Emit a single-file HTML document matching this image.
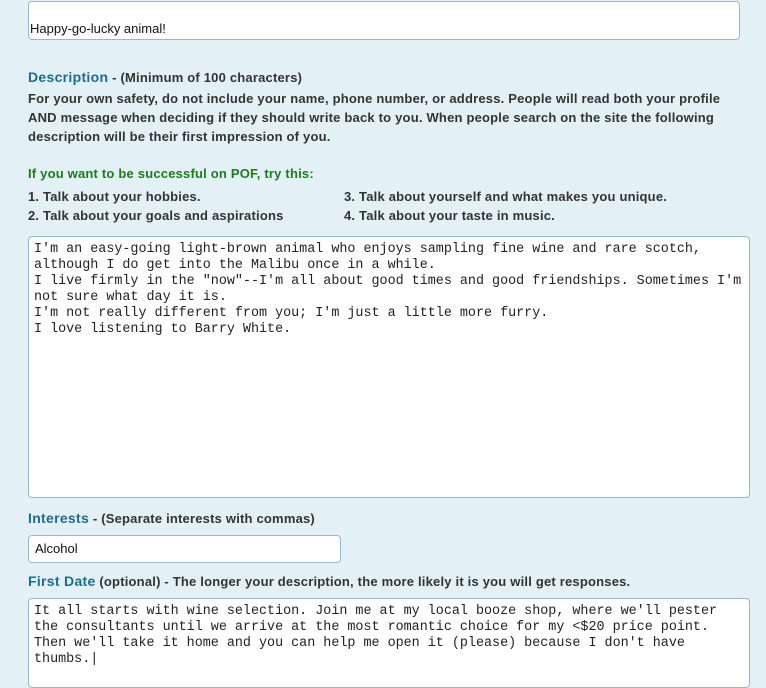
<!DOCTYPE html>
<html><head><style>
body{margin:0;background:#e3f1f7;width:766px;height:676px;overflow:hidden;position:relative;font-family:"Liberation Sans",Arial,sans-serif;color:#333;}
.a{position:absolute;}
.box{position:absolute;background:#fff;border:1px solid #9ab8cc;border-radius:4px;box-sizing:border-box;}
.t{font-size:13px;font-weight:bold;line-height:19px;letter-spacing:0.2px;}
.h{color:#1f6b8c;font-size:14px;font-weight:bold;letter-spacing:0.3px;}
.mono{font-family:"Liberation Mono","Courier New",monospace;font-size:13.4px;line-height:16px;color:#222;white-space:pre;}
</style></head><body>
<div class="box" style="left:28px;top:1px;width:712px;height:39px;"></div>
<div class="a" style="left:30px;top:21px;font-size:13px;color:#111;">Happy-go-lucky animal!</div>
<div class="a t" style="left:28px;top:68px;"><span class="h">Description</span> - (Minimum of 100 characters)</div>
<div class="a t" style="left:28px;top:89px;width:700px;">For your own safety, do not include your name, phone number, or address. People will read both your profile AND message when deciding if they should write back to you. When people search on the site the following description will be their first impression of you.</div>
<div class="a t" style="left:28px;top:164px;color:#1d7a1d;">If you want to be successful on POF, try this:</div>
<div class="a t" style="left:28px;top:187px;">1. Talk about your hobbies.<br>2. Talk about your goals and aspirations</div>
<div class="a t" style="left:344px;top:187px;">3. Talk about yourself and what makes you unique.<br>4. Talk about your taste in music.</div>
<div class="box" style="left:28px;top:236px;width:722px;height:262px;"></div>
<div class="a mono" style="left:34px;top:242px;">I'm an easy-going light-brown animal who enjoys sampling fine wine and rare scotch,
although I do get into the Malibu once in a while.
I live firmly in the "now"--I'm all about good times and good friendships. Sometimes I'm
not sure what day it is.
I'm not really different from you; I'm just a little more furry.
I love listening to Barry White.</div>
<div class="a t" style="left:28px;top:509px;"><span class="h">Interests</span> - (Separate interests with commas)</div>
<div class="box" style="left:28px;top:535px;width:313px;height:28px;"></div>
<div class="a" style="left:35px;top:541px;font-size:13px;color:#111;">Alcohol</div>
<div class="a t" style="left:28px;top:572px;"><span class="h">First Date</span> (optional) - The longer your description, the more likely it is you will get responses.</div>
<div class="box" style="left:28px;top:598px;width:722px;height:90px;"></div>
<div class="a mono" style="left:34px;top:604px;">It all starts with wine selection. Join me at my local booze shop, where we'll pester
the consultants until we arrive at the most romantic choice for my &lt;$20 price point.
Then we'll take it home and you can help me open it (please) because I don't have
thumbs.|</div>
</body></html>
